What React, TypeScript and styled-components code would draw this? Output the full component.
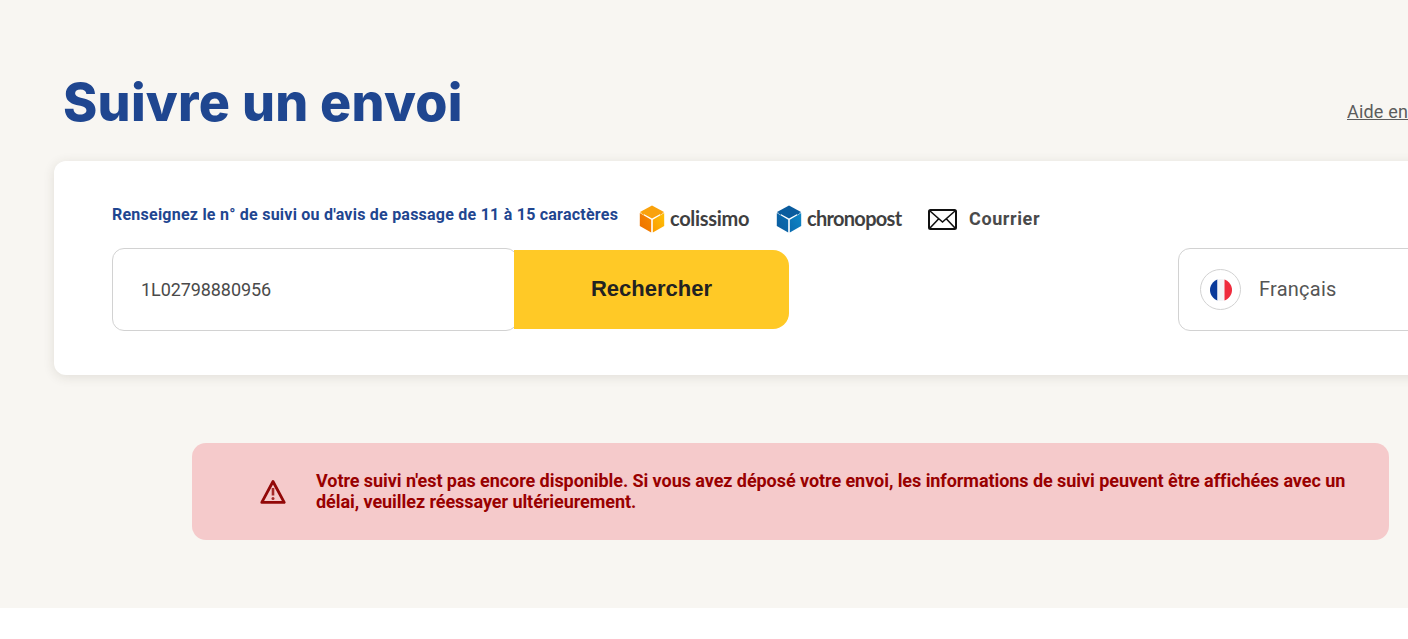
import React from "react";
import styled, { createGlobalStyle } from "styled-components";

const Global = createGlobalStyle`
  html, body { margin: 0; padding: 0; background: #fff; overflow: hidden; width: 1408px; height: 639px; }
  * { box-sizing: border-box; }
`;

const Page = styled.main`
  width: 1408px;
  height: 608px;
  background: #f8f6f2;
  overflow: hidden;
  padding: 69px 0 0 54px;
`;

const Header = styled.header`
  display: flex;
  align-items: flex-start;
  width: 1500px;
  height: 92px;
  padding-left: 9px;
`;

const Title = styled.h1`
  margin: 0;
  width: 1284px;
  font-family: "Inter", "Liberation Sans", sans-serif;
  font-size: 52px;
  line-height: 68px;
  font-weight: 800;
  letter-spacing: 0.26px;
  color: #1f4690;
`;

const HelpLink = styled.a`
  margin-top: 31px;
  font-family: "Roboto", sans-serif;
  font-size: 18px;
  line-height: 24px;
  letter-spacing: 0.2px;
  color: #5c5c5c;
  text-decoration: underline;
  white-space: nowrap;
`;

const Card = styled.section`
  width: 1500px;
  height: 214px;
  background: #fff;
  border-radius: 12px;
  box-shadow: 0 2px 12px rgba(60, 50, 30, 0.12);
  padding: 38px 58px 0;
`;

const CarrierRow = styled.div`
  display: flex;
  align-items: center;
  height: 40px;
`;

const Hint = styled.label`
  width: 527px;
  font-family: "Roboto", sans-serif;
  font-size: 16px;
  font-weight: 700;
  line-height: 30px;
  margin-top: -8px;
  letter-spacing: 0.235px;
  color: #1f4690;
  white-space: nowrap;
`;

const Carrier = styled.div<{ $w: number }>`
  display: flex;
  align-items: center;
  gap: 5px;
  width: ${(p) => p.$w}px;
`;

const LogoWord = styled.span<{ $track: number }>`
  font-family: "Lato", "Noto Sans", sans-serif;
  font-size: 20px;
  line-height: 24px;
  font-weight: 700;
  letter-spacing: ${(p) => p.$track}px;
  color: #3f3f41;
  margin-top: -2px;
`;

const MailWord = styled.span`
  font-family: "Roboto", sans-serif;
  font-size: 18px;
  line-height: 22px;
  font-weight: 700;
  letter-spacing: 0.6px;
  color: #4a4a4a;
  margin: 0 0 0 7px;
`;

const EnvelopeSlot = styled.span`
  display: flex;
  margin-left: 1px;
`;

const SearchRow = styled.div`
  display: flex;
  align-items: center;
  margin-top: 9px;
`;

const TrackInput = styled.div`
  width: 406px;
  height: 83px;
  flex: none;
  display: flex;
  align-items: center;
  padding: 0 0 0 28px;
  border: 1px solid #d2d2d2;
  border-radius: 12px;
  background: #fff;
  font-family: "Roboto", sans-serif;
  font-size: 18px;
  letter-spacing: -0.08px;
  color: #4a4a4a;
`;

const SearchButton = styled.button`
  width: 275px;
  height: 79px;
  flex: none;
  margin-left: -4px;
  position: relative;
  border: 0;
  border-radius: 0 16px 16px 0;
  background: #ffc926;
  font-family: "Liberation Sans", sans-serif;
  font-size: 22px;
  font-weight: 700;
  color: #222;
  padding: 0 0 2px;
`;

const LangSelect = styled.div`
  margin-left: 389px;
  width: 300px;
  height: 83px;
  flex: none;
  display: flex;
  align-items: center;
  gap: 18px;
  padding-left: 21px;
  border: 1px solid #d2d2d2;
  border-radius: 12px;
  font-family: "Roboto", sans-serif;
  font-size: 20px;
  letter-spacing: 0.25px;
  color: #555;
`;

const LangLabel = styled.span`
  margin-top: -2px;
`;

const Flag = styled.span`
  width: 41px;
  height: 41px;
  flex: none;
  display: flex;
  align-items: center;
  justify-content: center;
  border: 1px solid #d2d2d2;
  border-radius: 50%;
`;

const AlertRow = styled.div`
  padding: 68px 0 0 138px;
`;

const Alert = styled.div`
  width: 1197px;
  height: 97px;
  display: flex;
  align-items: center;
  padding-left: 68px;
  gap: 30px;
  background: #f5cacb;
  border-radius: 14px;
`;

const AlertIcon = styled.span`
  display: flex;
`;

const AlertText = styled.p`
  margin: -2px 0 0;
  width: 1050px;
  font-family: "Roboto", sans-serif;
  font-size: 18px;
  font-weight: 700;
  line-height: 21px;
  letter-spacing: -0.06px;
  color: #990000;
`;

const Box = ({ id, left, top, right }: { id: string; left: [string, string]; top: string; right: [string, string] }) => (
  <svg width="26" height="28" viewBox="0 0 26 28" aria-hidden="true">
    <defs>
      <linearGradient id={`${id}l`} x1="0" y1="1" x2="1" y2="0">
        <stop offset="0" stopColor={left[0]} />
        <stop offset="1" stopColor={left[1]} />
      </linearGradient>
      <linearGradient id={`${id}r`} x1="0" y1="1" x2="1" y2="0">
        <stop offset="0" stopColor={right[0]} />
        <stop offset="1" stopColor={right[1]} />
      </linearGradient>
    </defs>
    <path d="M13 0.500 25 7 13 13.600 1 7z" fill={top} />
    <path d="M0.800 8 12.200 14.800V27.500L0.800 21z" fill={`url(#${id}l)`} />
    <path d="M25.200 8 13.800 14.800V27.500L25.200 21z" fill={`url(#${id}r)`} />
    <path d="M0.800 7.500 5 10 5 8zM25.200 7.500 21 10 21 8z" fill={top} />
  </svg>
);

const Envelope = () => (
  <svg width="29" height="21" viewBox="0 0 29 21" aria-hidden="true">
    <rect x="1" y="1" width="27" height="19" rx="1.500" fill="#fff" stroke="#111" strokeWidth="2" />
    <path d="M2 2 14.500 13 27 2M2 19l8.500-9M27 19l-8.500-9" fill="none" stroke="#111" strokeWidth="1.600" />
  </svg>
);

const FrenchFlag = () => (
  <svg width="22" height="22" viewBox="0 0 22 22" aria-hidden="true">
    <defs>
      <clipPath id="disc"><circle cx="11" cy="11" r="11" /></clipPath>
    </defs>
    <g clipPath="url(#disc)">
      <rect width="7.500" height="22" fill="#0a3a9a" />
      <rect x="7.500" width="7" height="22" fill="#f4f4f6" />
      <rect x="14.500" width="7.500" height="22" fill="#ef2b3d" />
    </g>
  </svg>
);

const WarningIcon = () => (
  <svg width="26" height="26" viewBox="0 0 26 26" aria-hidden="true">
    <path d="M13 2.500 24.200 23.400H1.800z" fill="none" stroke="#920808" strokeWidth="2.800" strokeLinejoin="round" />
    <path d="M13 9v7.500" stroke="#a52a2a" strokeWidth="2.600" />
    <circle cx="13" cy="19.500" r="1.500" fill="#a52a2a" />
  </svg>
);

export default function App() {
  return (
    <>
      <Global />
      <Page>
        <Header>
          <Title>Suivre un envoi</Title>
          <HelpLink>Aide en ligne</HelpLink>
        </Header>
        <Card>
          <CarrierRow>
            <Hint>Renseignez le n° de suivi ou d'avis de passage de 11 à 15 caractères</Hint>
            <Carrier $w={137}>
              <Box id="col" left={["#ee6f00", "#f58a00"]} top="#f9a20c" right={["#fb9c00", "#ffc107"]} />
              <LogoWord $track={-0.3}>colissimo</LogoWord>
            </Carrier>
            <Carrier $w={151}>
              <Box id="chr" left={["#0a5c9e", "#0b6cb0"]} top="#0a5c9e" right={["#0b6cb0", "#0f88c8"]} />
              <LogoWord $track={-0.7}>chronopost</LogoWord>
            </Carrier>
            <Carrier $w={150}>
              <EnvelopeSlot><Envelope /></EnvelopeSlot>
              <MailWord>Courrier</MailWord>
            </Carrier>
          </CarrierRow>
          <SearchRow>
            <TrackInput>1L02798880956</TrackInput>
            <SearchButton>Rechercher</SearchButton>
            <LangSelect>
              <Flag><FrenchFlag /></Flag>
              <LangLabel>Français</LangLabel>
            </LangSelect>
          </SearchRow>
        </Card>
        <AlertRow>
          <Alert>
            <AlertIcon><WarningIcon /></AlertIcon>
            <AlertText>
              Votre suivi n'est pas encore disponible. Si vous avez déposé votre envoi, les informations de suivi peuvent être affichées avec un délai, veuillez réessayer ultérieurement.
            </AlertText>
          </Alert>
        </AlertRow>
      </Page>
    </>
  );
}
